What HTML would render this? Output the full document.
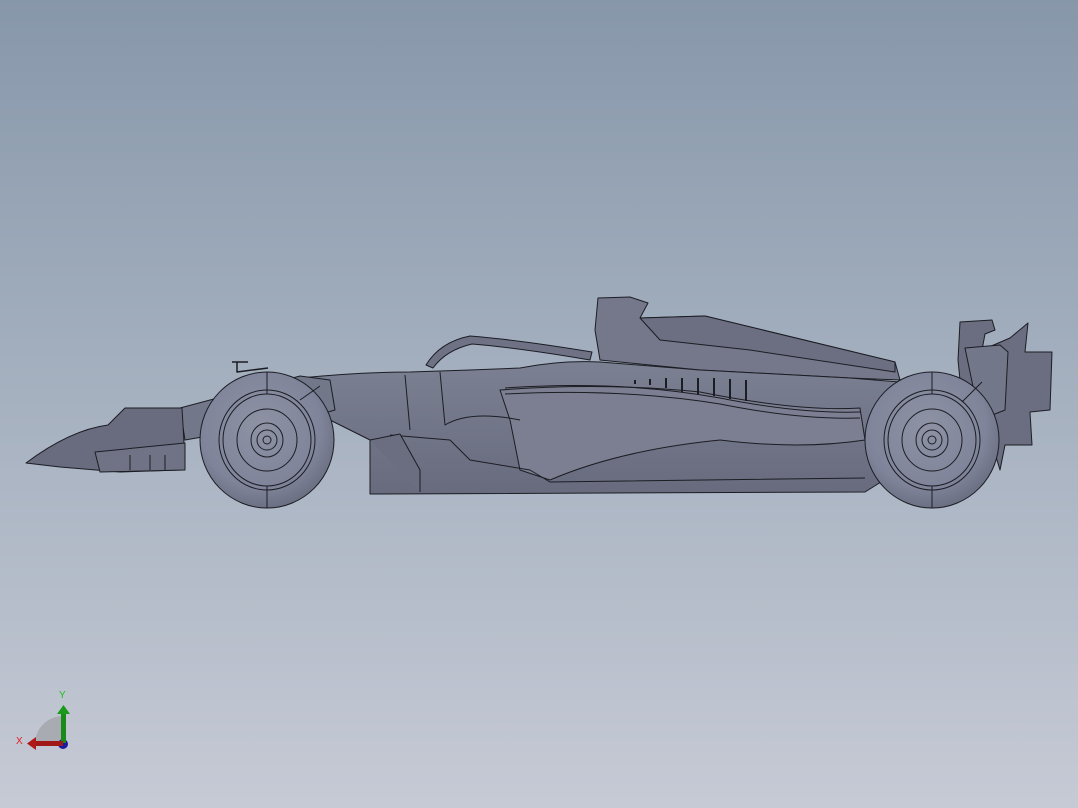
<!DOCTYPE html>
<html><head><meta charset="utf-8"><style>
html,body{margin:0;padding:0;width:1078px;height:808px;overflow:hidden}
body{background:linear-gradient(to bottom,#8797aa 0%,#a3afbe 45%,#c6cad5 100%)}
svg{position:absolute;left:0;top:0}
</style></head><body>
<svg width="1078" height="808" viewBox="0 0 1078 808">
<defs>
<radialGradient id="tire" cx="0.45" cy="0.4" r="0.6">
<stop offset="0" stop-color="#8e92a4"/><stop offset="0.75" stop-color="#80849a"/><stop offset="1" stop-color="#6c7083"/>
</radialGradient>
<linearGradient id="body" x1="0" y1="0" x2="0" y2="1">
<stop offset="0" stop-color="#7b8092"/><stop offset="1" stop-color="#676b7d"/>
</linearGradient>
</defs>
<g stroke="#1c1d24" stroke-width="1" stroke-linejoin="round">
<path d="M960 322 L992 320 L995 330 L985 334 L982 350 L1010 338 L1028 323 L1025 352 L1052 352 L1050 410 L1030 412 L1032 445 L1005 445 L1000 470 L985 420 L962 400 L958 360 Z" fill="#6a6e80"/>
<path d="M965 348 L1000 345 L1008 352 L1005 410 L980 420 Z" fill="#73778a"/>
<path d="M598 298 L630 297 L648 303 L640 318 L705 316 L895 362 L900 380 L850 378 L700 370 L600 360 L595 330 Z" fill="#74788a"/>
<path d="M640 318 L705 316 L895 362 L895 372 L750 350 L660 340 Z" fill="#6b6f81"/>
<path d="M426 365 Q440 342 470 336 Q520 340 592 352 L590 360 Q520 348 472 344 Q446 350 433 368 Z" fill="#6e7284"/>
<path d="M300 378 Q360 372 410 372 L470 370 L520 368 Q560 360 600 362 L700 370 L850 378 L900 382 L900 470 L865 492 L370 494 L370 440 L330 420 L300 410 Z" fill="url(#body)"/>
<path d="M500 390 Q600 382 700 392 Q800 412 860 408 L865 440 Q800 450 720 440 Q620 450 550 480 L520 470 L510 420 Z" fill="#7b7f91"/>
<path d="M505 388 Q620 380 720 398 Q800 414 860 412" fill="none"/>
<path d="M505 394 Q620 388 720 404 Q800 420 860 418" fill="none"/>
<path d="M390 435 L450 440 L470 460 L530 470 L550 482 L865 478" fill="none"/>
<path d="M405 375 L410 430 M440 372 L445 425 Q470 410 520 420" fill="none"/>
<path d="M370 440 L400 434 L420 470 L420 492" fill="#6a6e80"/>
<g stroke-width="2">
<path d="M635 380v4 M650 379v6 M666 378v10 M682 378v14 M698 378v16 M714 378v18 M730 379v20 M746 380v21"/>
</g>
<path d="M180 408 L300 376 L330 380 L335 410 L300 420 L185 440 Z" fill="#73778a"/>
<path d="M26 463 Q70 430 108 425 L125 408 L182 408 L185 460 L180 470 L120 472 L60 467 Z" fill="#686c7e"/>
<path d="M95 452 L185 443 L185 470 L100 472 Z" fill="#6f7385"/>
<path d="M130 455v15 M150 455v15 M165 455v15" fill="none"/>
<path d="M232 362 L248 362 M237 362v10 L268 368" fill="none" stroke-width="1.5"/>
<g>
<ellipse cx="267" cy="440" rx="67" ry="68" fill="url(#tire)"/>
<ellipse cx="267" cy="440" rx="48" ry="50" fill="none"/>
<ellipse cx="267" cy="440" rx="44" ry="46" fill="none"/>
<ellipse cx="267" cy="440" rx="30" ry="31" fill="none"/>
<ellipse cx="267" cy="440" rx="16" ry="17" fill="none"/>
<ellipse cx="267" cy="440" rx="10" ry="10" fill="none"/>
<ellipse cx="267" cy="440" rx="4" ry="4" fill="none"/>
<path d="M267 372v22 M267 486v22 M300 400l20-14" fill="none"/>
</g>
<g>
<ellipse cx="932" cy="440" rx="67" ry="68" fill="url(#tire)"/>
<ellipse cx="932" cy="440" rx="48" ry="50" fill="none"/>
<ellipse cx="932" cy="440" rx="44" ry="46" fill="none"/>
<ellipse cx="932" cy="440" rx="30" ry="31" fill="none"/>
<ellipse cx="932" cy="440" rx="16" ry="17" fill="none"/>
<ellipse cx="932" cy="440" rx="10" ry="10" fill="none"/>
<ellipse cx="932" cy="440" rx="4" ry="4" fill="none"/>
<path d="M932 372v22 M932 486v22 M962 402l20-20" fill="none"/>
</g>
</g>
<path d="M35 744 C35 728.5 47.5 716 63 716 L63 744 Z" fill="#a8abb2"/>
<circle cx="63" cy="744" r="5" fill="#1a1aa0"/>
<rect x="61" y="713" width="5" height="30" fill="#1a8a1a"/>
<path d="M57 714 L63.5 705 L70 714 Z" fill="#1a9a1a"/>
<rect x="35" y="741" width="28" height="5" fill="#a01818"/>
<path d="M36 737 L27 743.5 L36 750 Z" fill="#b01818"/>
<text x="59" y="698" font-family="Liberation Sans,sans-serif" font-size="10" fill="#20c020">Y</text>
<text x="16" y="744" font-family="Liberation Sans,sans-serif" font-size="10" fill="#e02020">X</text>
</svg>
</body></html>
